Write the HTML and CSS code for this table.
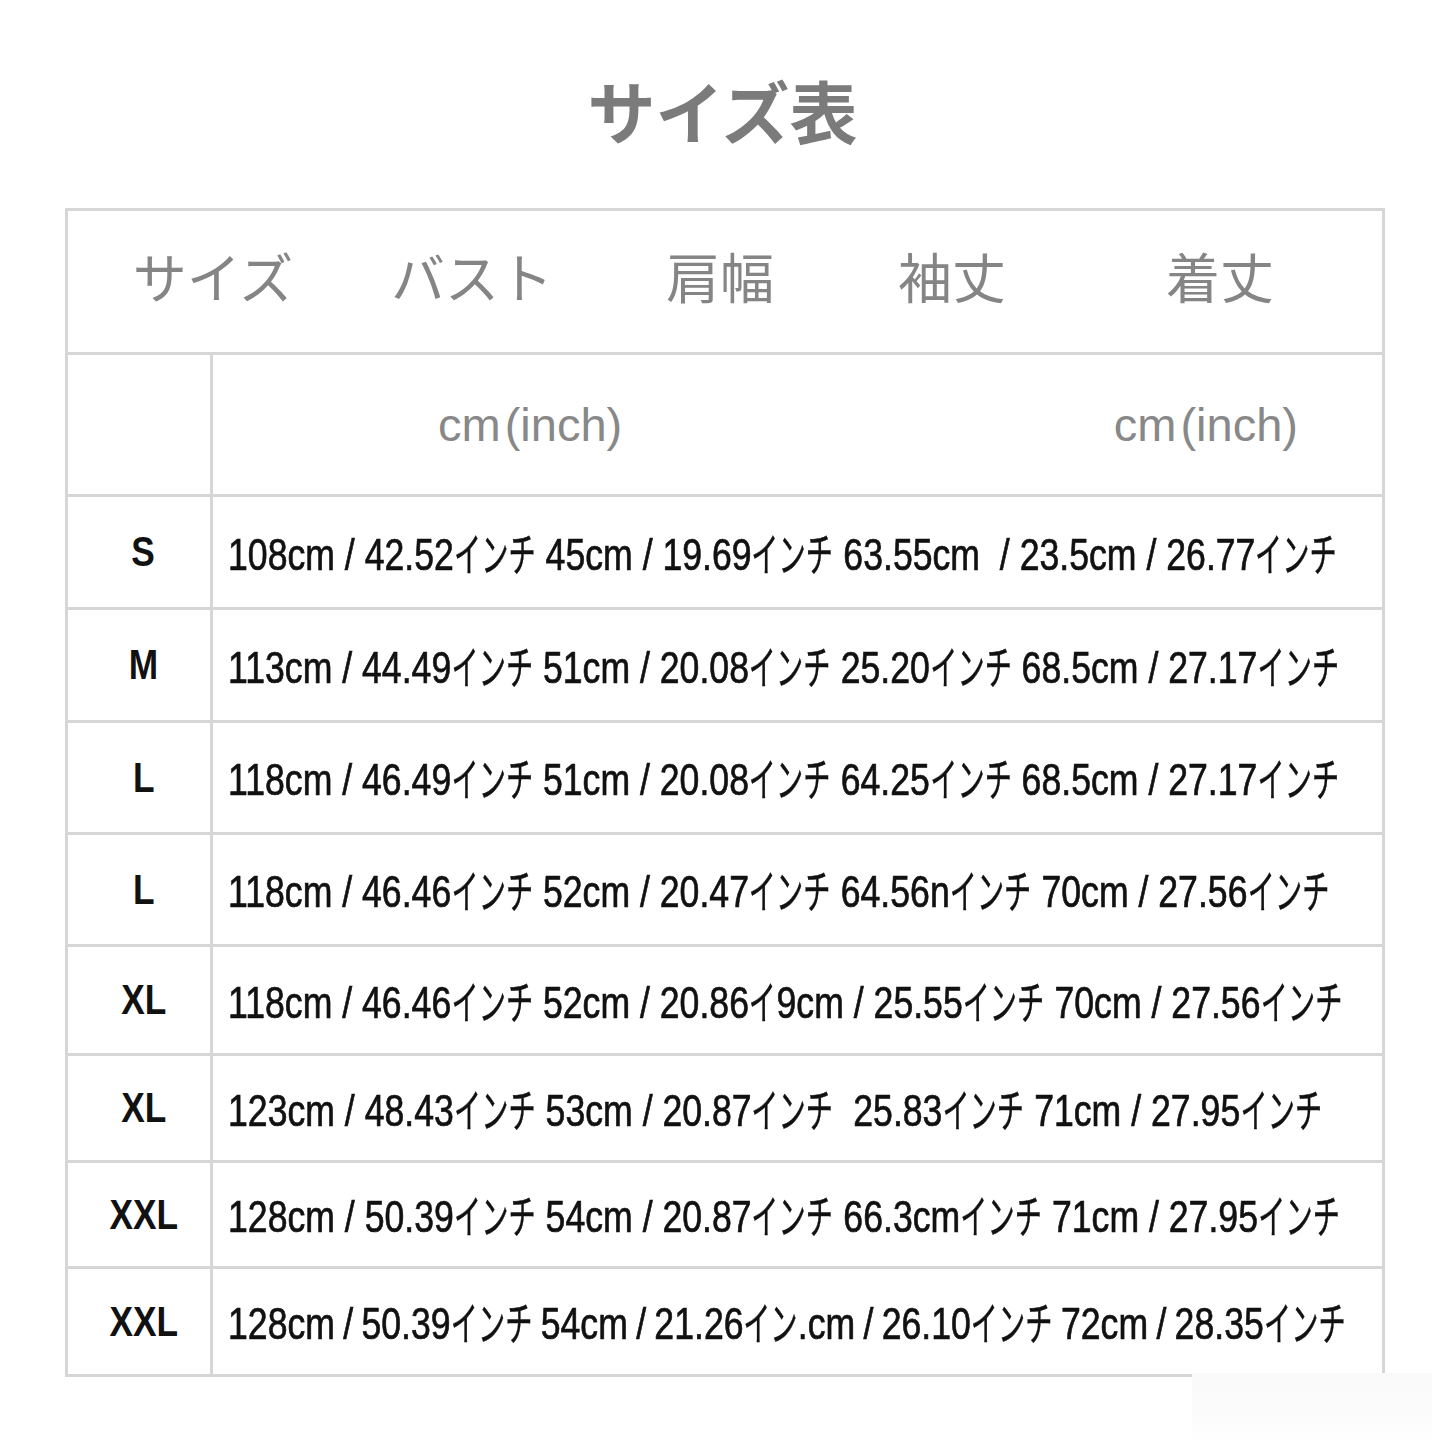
FILE: index.html
```html
<!DOCTYPE html>
<html lang="ja">
<head>
<meta charset="utf-8">
<title>サイズ表</title>
<link rel="stylesheet" href="styles.css">
</head>
<body>
<div class="page">
  <h1 class="title">サイズ表</h1>
  <div class="chart">
    <div class="head">
      <span>サイズ</span><span>バスト</span><span>肩幅</span><span>袖丈</span><span class="last">着丈</span>
    </div>
    <div class="row unit">
      <div class="size"></div>
      <div class="vals"><span class="cm">cm<span class="paren">(inch)</span></span><span class="cm">cm<span class="paren">(inch)</span></span></div>
    </div>
    <div class="row r1">
      <div class="size"><span>S</span></div>
      <div class="vals"><span class="line">108cm / 42.52<span class="u">インチ</span> 45cm / 19.69<span class="u">インチ</span> 63.55cm&nbsp; / 23.5cm / 26.77<span class="u">インチ</span></span></div>
    </div>
    <div class="row r2">
      <div class="size"><span>M</span></div>
      <div class="vals"><span class="line">113cm / 44.49<span class="u">インチ</span> 51cm / 20.08<span class="u">インチ</span> 25.20<span class="u">インチ</span> 68.5cm / 27.17<span class="u">インチ</span></span></div>
    </div>
    <div class="row r3">
      <div class="size"><span>L</span></div>
      <div class="vals"><span class="line">118cm / 46.49<span class="u">インチ</span> 51cm / 20.08<span class="u">インチ</span> 64.25<span class="u">インチ</span> 68.5cm / 27.17<span class="u">インチ</span></span></div>
    </div>
    <div class="row r4">
      <div class="size"><span>L</span></div>
      <div class="vals"><span class="line">118cm / 46.46<span class="u">インチ</span> 52cm / 20.47<span class="u">インチ</span> 64.56n<span class="u">インチ</span> 70cm / 27.56<span class="u">インチ</span></span></div>
    </div>
    <div class="row r5">
      <div class="size"><span>XL</span></div>
      <div class="vals"><span class="line">118cm / 46.46<span class="u">インチ</span> 52cm / 20.86<span class="u u1">イ</span>9cm / 25.55<span class="u">インチ</span> 70cm / 27.56<span class="u">インチ</span></span></div>
    </div>
    <div class="row r6">
      <div class="size"><span>XL</span></div>
      <div class="vals"><span class="line">123cm / 48.43<span class="u">インチ</span> 53cm / 20.87<span class="u">インチ</span>&nbsp; 25.83<span class="u">インチ</span> 71cm / 27.95<span class="u">インチ</span></span></div>
    </div>
    <div class="row r7">
      <div class="size"><span>XXL</span></div>
      <div class="vals"><span class="line">128cm / 50.39<span class="u">インチ</span> 54cm / 20.87<span class="u">インチ</span> 66.3cm<span class="u">インチ</span> 71cm / 27.95<span class="u">インチ</span></span></div>
    </div>
    <div class="row r8">
      <div class="size"><span>XXL</span></div>
      <div class="vals"><span class="line tight">128cm / 50.39<span class="u">インチ</span> 54cm / 21.26<span class="u u2">イン</span>.cm / 26.10<span class="u">インチ</span> 72cm / 28.35<span class="u">インチ</span></span></div>
    </div>
  </div>
  <div class="wm"></div>
</div>
</body>
</html>
```

FILE: styles.css
```css
* {
  box-sizing: border-box;
}

body {
  margin: 0;
  background: #ffffff;
}

.page {
  position: relative;
  width: 1445px;
  height: 1445px;
  overflow: hidden;
}

.title {
  margin: 0;
  height: 208px;
  padding-top: 12px;
  display: flex;
  align-items: center;
  justify-content: center;
  font: 700 68px/1 "Noto Sans CJK JP", sans-serif;
  color: #7b7b7b;
}

.chart {
  margin-left: 65px;
  width: 1320px;
  border: 3px solid #d6d6d6;
}

.head {
  height: 144px;
  padding-bottom: 12px;
  border-bottom: 3px solid #d6d6d6;
  display: grid;
  grid-template-columns: 290px 228px 268px 196px 1fr;
  align-items: center;
  text-align: center;
  font: 400 54px/1 "Noto Sans CJK JP", sans-serif;
  color: #858585;
}

.head .last {
  padding-left: 8px;
}

.row {
  display: grid;
  grid-template-columns: 142px 1fr;
  border-bottom: 3px solid #d6d6d6;
}

.row:last-child {
  border-bottom: 0;
}

.unit { height: 142px; }
.r1 { height: 113px; }
.r2 { height: 113px; }
.r3 { height: 112px; }
.r4 { height: 112px; }
.r5 { height: 109px; }
.r6 { height: 107px; }
.r7 { height: 106px; }
.r8 { height: 105px; }

.size {
  display: flex;
  align-items: center;
  justify-content: center;
  padding-left: 9px;
  font: 700 42px/1 "Liberation Sans", sans-serif;
  color: #111111;
}

.size span {
  display: inline-block;
  transform: scaleX(0.84);
}

.vals {
  border-left: 3px solid #d6d6d6;
  display: flex;
  align-items: center;
  padding-left: 15px;
}

.line {
  display: inline-block;
  white-space: nowrap;
  font: 400 44px/1 "Liberation Sans", "Noto Sans CJK JP", sans-serif;
  color: #111111;
  -webkit-text-stroke: 0.7px #111111;
  transform: scaleX(0.81);
  transform-origin: left center;
}

.line.tight {
  word-spacing: -2px;
}

.u {
  display: inline-block;
  font-family: "Noto Sans CJK JP", sans-serif;
  font-size: 46px;
  -webkit-text-stroke: 0.5px #111111;
  transform: scaleX(0.73);
  transform-origin: left center;
  margin-right: -37px;
  vertical-align: -1px;
}

.u1 {
  margin-right: -12px;
}

.u2 {
  margin-right: -25px;
}

.unit .vals {
  justify-content: space-between;
  padding-left: 225px;
  padding-right: 84px;
}

.cm {
  font: 400 47px/1 "Liberation Sans", sans-serif;
  color: #888888;
}

.paren {
  margin-left: 4px;
}

.wm {
  position: absolute;
  left: 1192px;
  top: 1373px;
  width: 240px;
  height: 72px;
  background: linear-gradient(180deg, #f9f9f9 0%, #fcfcfc 60%, #ffffff 100%);
}
```
